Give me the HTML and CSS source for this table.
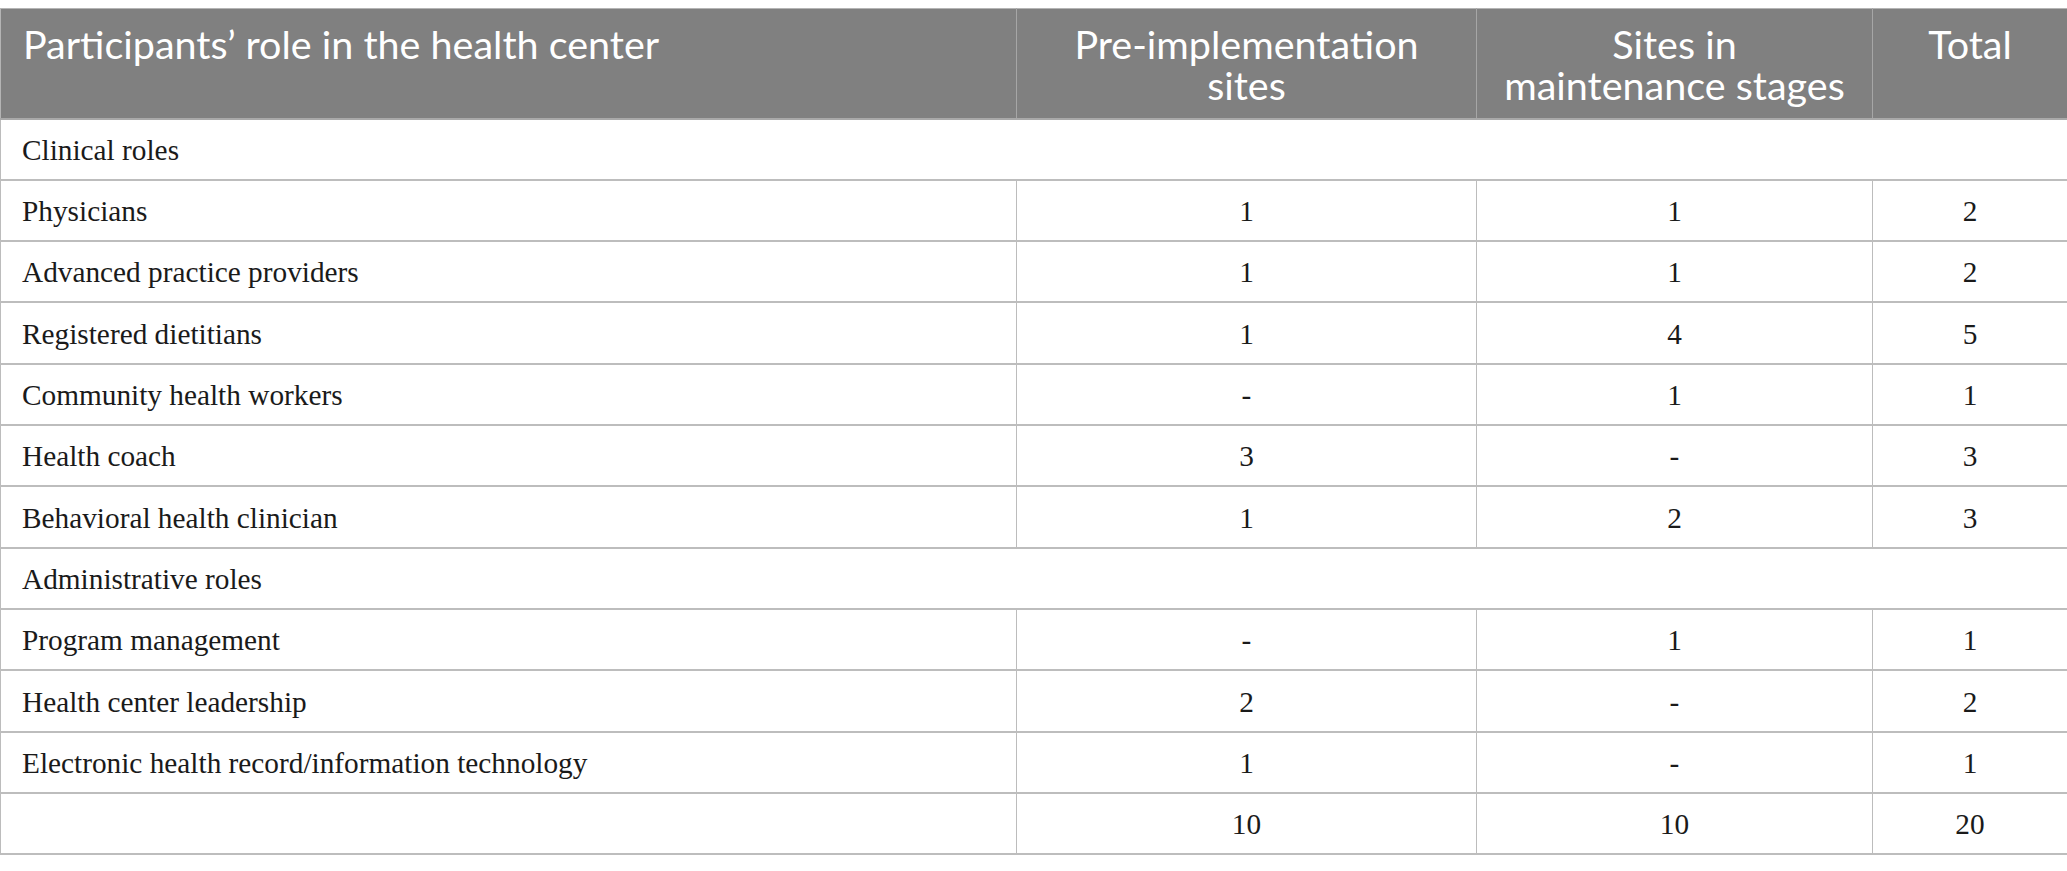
FILE: index.html
```html
<!DOCTYPE html>
<html lang="en">
<head>
<meta charset="utf-8">
<title>Participants' roles</title>
<link rel="stylesheet" href="styles.css">
</head>
<body>
<table class="data">
  <colgroup>
    <col class="c-role">
    <col class="c-pre">
    <col class="c-main">
    <col class="c-total">
  </colgroup>
  <thead>
    <tr class="head-row">
      <th class="left">Participants’ role in the health center</th>
      <th><span class="hl">Pre-implementation</span><span class="hl">sites</span></th>
      <th><span class="hl">Sites in</span><span class="hl">maintenance stages</span></th>
      <th>Total</th>
    </tr>
  </thead>
  <tbody>
    <tr><td class="left" colspan="4">Clinical roles</td></tr>
    <tr><td class="left">Physicians</td><td>1</td><td>1</td><td>2</td></tr>
    <tr><td class="left">Advanced practice providers</td><td>1</td><td>1</td><td>2</td></tr>
    <tr><td class="left">Registered dietitians</td><td>1</td><td>4</td><td>5</td></tr>
    <tr><td class="left">Community health workers</td><td>-</td><td>1</td><td>1</td></tr>
    <tr><td class="left">Health coach</td><td>3</td><td>-</td><td>3</td></tr>
    <tr><td class="left">Behavioral health clinician</td><td>1</td><td>2</td><td>3</td></tr>
    <tr><td class="left" colspan="4">Administrative roles</td></tr>
    <tr><td class="left">Program management</td><td>-</td><td>1</td><td>1</td></tr>
    <tr><td class="left">Health center leadership</td><td>2</td><td>-</td><td>2</td></tr>
    <tr><td class="left">Electronic health record/information technology</td><td>1</td><td>-</td><td>1</td></tr>
    <tr><td class="left"></td><td>10</td><td>10</td><td>20</td></tr>
  </tbody>
</table>
</body>
</html>
```

FILE: styles.css
```css
html, body {
  background: #ffffff;
}
body {
  margin: 8px 0 0 0;
}
.data {
  width: 2067px;
  border-collapse: collapse;
  table-layout: fixed;
  border: 1px solid #b4b4b4;
}
.c-role { width: 1016px; }
.c-pre { width: 460px; }
.c-main { width: 396px; }
.c-total { width: 195px; }

.head-row { height: 110px; }
.data th {
  background: #808080;
  color: #ffffff;
  font-family: Lato, "Open Sans", sans-serif;
  font-weight: 400;
  font-size: 39.5px;
  line-height: 41px;
  text-align: center;
  vertical-align: top;
  padding: 14px 8px 0 8px;
  border-left: 1px solid #a6a6a6;
  border-bottom: 2px solid #a9a9a9;
}
.data th .hl {
  display: block;
  height: 41px;
  line-height: 41px;
}
.data th.left {
  text-align: left;
  padding-left: 22px;
  border-left: 1px solid #b4b4b4;
}
.data tbody tr { height: 61.33px; }
.data td {
  font-family: "Liberation Serif", "Times New Roman", serif;
  font-size: 29.3px;
  color: #1a1a1a;
  text-align: center;
  vertical-align: middle;
  padding: 2px 10px 0 10px;
  border: 1px solid #bcbcbc;
  border-bottom: 2px solid #bdbdbd;
}
.data td.left {
  text-align: left;
  padding-left: 21px;
}
```
